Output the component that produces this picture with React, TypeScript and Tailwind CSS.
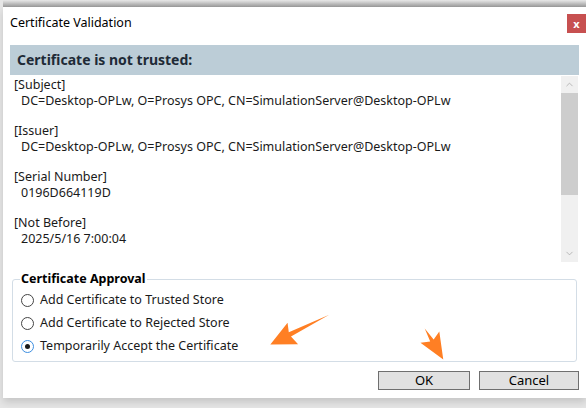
import { ChevronUp, ChevronDown } from 'lucide-react';

const font = { fontFamily: '"Noto Sans", "Open Sans", sans-serif' };

const details = [
  { label: '[Subject]', value: 'DC=Desktop-OPLw, O=Prosys OPC, CN=SimulationServer@Desktop-OPLw' },
  { label: '[Issuer]', value: 'DC=Desktop-OPLw, O=Prosys OPC, CN=SimulationServer@Desktop-OPLw' },
  { label: '[Serial Number]', value: '0196D664119D' },
  { label: '[Not Before]', value: '2025/5/16 7:00:04' },
];

const options = [
  'Add Certificate to Trusted Store',
  'Add Certificate to Rejected Store',
  'Temporarily Accept the Certificate',
];

export default function App() {
  return (
    <div className="w-[586px] h-[408px] bg-[#e6e6e6] overflow-hidden relative" style={font}>
      <div className="h-[7px] bg-gradient-to-b from-[#e8e8e8] to-[#9a9a9a] ml-[3px]" />
      <div className="ml-[3px] w-[583px] h-[391px] bg-white flex flex-col shadow-[0_4px_8px_rgba(0,0,0,0.15)]">
        {/* Title bar */}
        <div className="flex items-start justify-between h-[38px]">
          <span className="text-[12.5px] text-black pl-[7px] pt-[7px] leading-[18px]">Certificate Validation</span>
          <button className="w-[19px] h-[19px] mt-[7px] bg-[#c75050] text-white text-[11px] font-bold leading-[17px] flex items-center justify-center">
            x
          </button>
        </div>

        {/* Header band */}
        <div className="mx-[7px] h-[30px] bg-[#bccdd7] flex items-center pl-[7px]">
          <span className="text-[14px] font-bold text-[#1e2a36] leading-none">Certificate is not trusted:</span>
        </div>

        {/* Details + scrollbar */}
        <div className="mx-[7px] h-[187px] flex">
          <div className="flex-1 pl-[4px] pt-[2px] text-[12.5px] leading-[16px] text-[#1a1a1a]">
            {details.map((d) => (
              <div key={d.label} className="mb-[14px]">
                <div>{d.label}</div>
                <div className="pl-[7px]">{d.value}</div>
              </div>
            ))}
          </div>
          <div className="w-[17px] mr-[1px] mt-[1px] bg-[#f0f0f0] flex flex-col">
            <div className="h-[17px] flex items-center justify-center">
              <ChevronUp size={11} strokeWidth={1.5} className="text-[#a0a0a0]" />
            </div>
            <div className="h-[102px] bg-[#cdcdcd]" />
            <div className="flex-1" />
            <div className="h-[17px] flex items-center justify-center">
              <ChevronDown size={11} strokeWidth={1.5} className="text-[#a0a0a0]" />
            </div>
          </div>
        </div>

        {/* Approval group */}
        <fieldset className="mx-[9px] mt-[9px] h-[91px] border border-[#d3dde6] rounded-[3px] px-[8px] pt-0 pb-0">
          <legend className="text-[12.5px] font-bold text-black px-[1px] -ml-[1px] leading-[16px]">Certificate Approval</legend>
          <div className="flex flex-col gap-[7px] pt-[5px]">
            {options.map((o, i) => (
              <label key={o} className="flex items-center gap-[6px] text-[12.5px] text-[#1a1a1a] leading-[16px]">
                <span
                  className={`w-[13px] h-[13px] rounded-full border flex items-center justify-center bg-white ${
                    i === 2 ? 'border-[#3c8ee0]' : 'border-[#444]'
                  }`}
                >
                  {i === 2 && <span className="w-[5px] h-[5px] rounded-full bg-[#1a1a1a]" />}
                </span>
                {o}
              </label>
            ))}
          </div>
        </fieldset>

        {/* Buttons */}
        <div className="flex justify-end gap-[9px] mr-[7px] mt-[9px]">
          <button className="w-[92px] h-[19px] bg-[#e1e1e1] border border-[#6f6f6f] text-[13px] leading-none text-black">OK</button>
          <button className="w-[100px] h-[19px] bg-[#e1e1e1] border border-[#6f6f6f] text-[13px] leading-none text-black">Cancel</button>
        </div>
      </div>

      {/* annotation arrows */}
      <svg className="absolute left-[265px] top-[315px] rotate-[154deg]" width="70" height="30" viewBox="0 0 70 30">
        <path d="M2 16 L46 13 L43 3 L68 15 L43 27 L46 18 Z" fill="#ff7f24" />
      </svg>
      <svg className="absolute left-[415px] top-[332px] rotate-[59deg]" width="38" height="24" viewBox="0 0 38 24">
        <path d="M1 12 L15 10 L11 1 L37 12 L11 23 L15 14 Z" fill="#ff7f24" />
      </svg>
    </div>
  );
}
